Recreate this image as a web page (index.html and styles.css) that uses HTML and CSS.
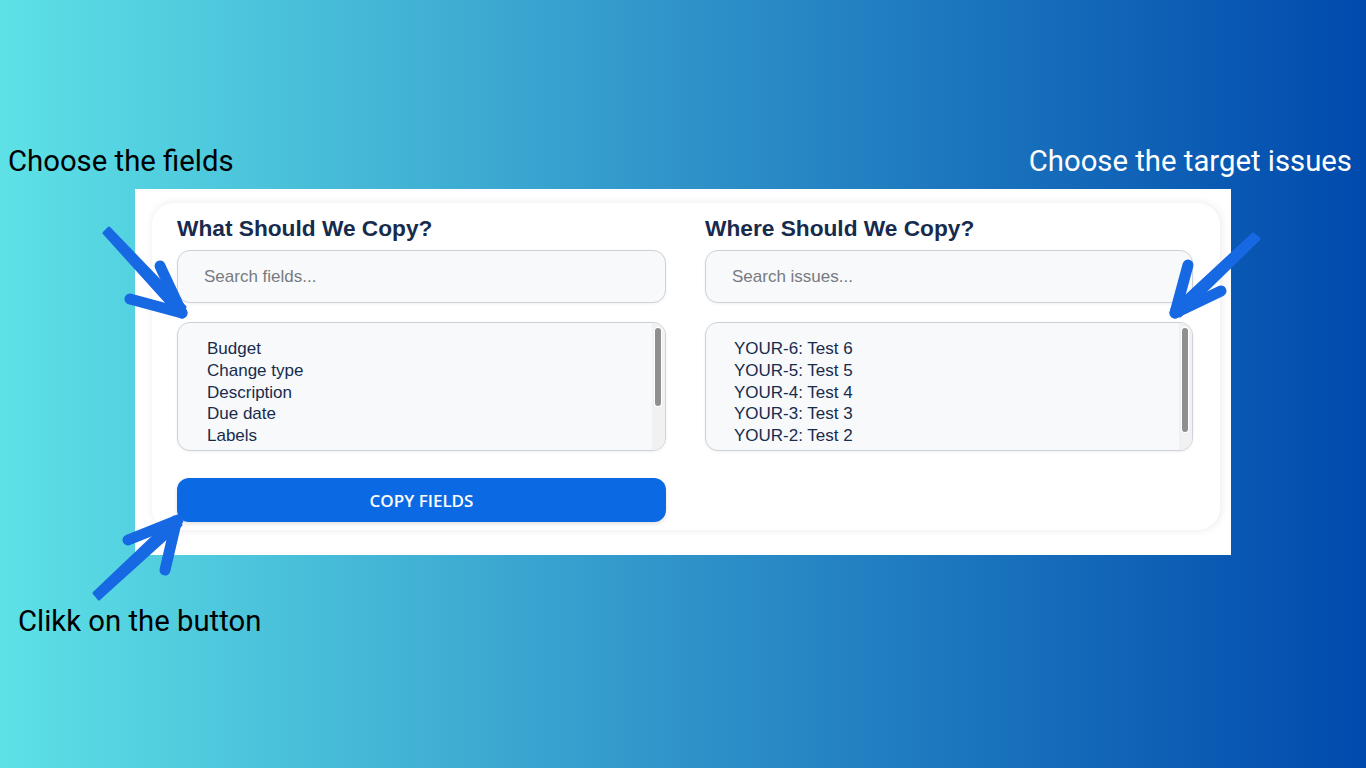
FILE: index.html
```html
<!DOCTYPE html>
<html lang="en">
<head>
<meta charset="utf-8">
<title>Copy Fields</title>
<link rel="stylesheet" href="styles.css">
</head>
<body>
<div class="page">
  <div class="top-notes">
    <p class="note dark">Choose the fields</p>
    <p class="note light">Choose the target issues</p>
  </div>

  <div class="shot">
    <div class="card">
      <section class="col">
        <h2 class="title">What Should We Copy?</h2>
        <input class="search" type="text" placeholder="Search fields...">
        <div class="list list-fields">
          <div class="item">Budget</div>
          <div class="item">Change type</div>
          <div class="item">Description</div>
          <div class="item">Due date</div>
          <div class="item">Labels</div>
          <div class="scroll-track"><div class="scroll-thumb thumb-fields"></div></div>
        </div>
        <button class="copy-btn" type="button">COPY FIELDS</button>
      </section>
      <section class="col">
        <h2 class="title">Where Should We Copy?</h2>
        <input class="search" type="text" placeholder="Search issues...">
        <div class="list list-issues">
          <div class="item">YOUR-6: Test 6</div>
          <div class="item">YOUR-5: Test 5</div>
          <div class="item">YOUR-4: Test 4</div>
          <div class="item">YOUR-3: Test 3</div>
          <div class="item">YOUR-2: Test 2</div>
          <div class="scroll-track"><div class="scroll-thumb thumb-issues"></div></div>
        </div>
      </section>
    </div>
  </div>

  <p class="note dark bottom-note">Clikk on the button</p>

  <svg class="arrows" width="1366" height="768" viewBox="0 0 1366 768" aria-hidden="true">
    <g fill="#1668e3" stroke="#1668e3" stroke-linecap="round" stroke-linejoin="round">
      <polygon points="104,233 109,228 185,307 178,315" stroke-width="3"/>
      <path d="M160 266 L182 313" stroke-width="11" fill="none"/>
      <path d="M130 299 L182 313" stroke-width="11" fill="none"/>

      <polygon points="1253,234 1259,239 1180,316 1172,309" stroke-width="3"/>
      <path d="M1188 265 L1175 313" stroke-width="11" fill="none"/>
      <path d="M1221 291 L1175 313" stroke-width="11" fill="none"/>

      <polygon points="94,593 99,599 181,525 174,517" stroke-width="3"/>
      <path d="M128 540 L178 520" stroke-width="11" fill="none"/>
      <path d="M165 570 L176 523" stroke-width="11" fill="none"/>
    </g>
  </svg>
</div>
</body>
</html>
```

FILE: styles.css
```css
* {
  box-sizing: border-box;
}

html, body {
  margin: 0;
  padding: 0;
}

body {
  font-family: "Liberation Sans", Arial, sans-serif;
}

.page {
  position: relative;
  width: 1366px;
  height: 768px;
  overflow: hidden;
  background: linear-gradient(90deg, #5de1e6 0%, #2f93c9 50%, #004aad 100%);
  display: flex;
  flex-direction: column;
}

.top-notes {
  display: flex;
  justify-content: space-between;
  padding: 144px 14px 0 8px;
}

.note {
  margin: 0;
  font-family: Roboto, "Noto Sans", sans-serif;
  font-size: 29.3px;
  line-height: 34px;
  font-weight: 400;
  white-space: nowrap;
}

.note.dark {
  color: #000;
}

.note.light {
  color: #fff;
}

.shot {
  margin: 11px 0 0 135px;
  width: 1096px;
  height: 366px;
  background: #fff;
  padding: 14px 11px 25px 17px;
}

.card {
  height: 327px;
  border-radius: 22px;
  background: #fff;
  box-shadow: 1px 0 10px rgba(0, 0, 0, 0.09);
  padding: 12px 27px 8px 25px;
  display: grid;
  grid-template-columns: 489px 488px;
  column-gap: 39px;
}

.col {
  display: flex;
  flex-direction: column;
}

.title {
  margin: 0 0 9px;
  font-family: "Liberation Sans", Arial, sans-serif;
  font-size: 22.7px;
  line-height: 26px;
  font-weight: 700;
  color: #172b4d;
  white-space: nowrap;
}

.search {
  height: 53px;
  width: 100%;
  border: 1px solid #cdd1d9;
  border-radius: 13px;
  background: #f8f9fb;
  padding: 0 0 0 26px;
  font-family: "Liberation Sans", Arial, sans-serif;
  font-size: 17px;
  color: #172b4d;
  box-shadow: 0 1px 3px rgba(0, 0, 0, 0.06);
  outline: none;
}

.search::placeholder {
  color: #777a80;
}

.list {
  position: relative;
  margin-top: 19px;
  height: 129px;
  border: 1px solid #cdd1d9;
  border-radius: 13px;
  background: #f8f9fb;
  padding: 15px 0 0 29px;
  overflow: hidden;
  font-size: 17px;
  line-height: 21.75px;
  color: #172b4d;
  box-shadow: 0 1px 3px rgba(0, 0, 0, 0.06);
}

.list-issues {
  padding-left: 28px;
}

.scroll-track {
  position: absolute;
  top: 0;
  right: 0;
  bottom: 0;
  width: 13px;
  background: #f1f1f1;
}

.scroll-thumb {
  position: absolute;
  top: 5px;
  left: 3px;
  width: 6px;
  border-radius: 3px;
  background: #8f8f8f;
  box-shadow: 0 0 0 1px #fff;
}

.thumb-fields {
  height: 78px;
}

.thumb-issues {
  height: 104px;
}

.item {
  white-space: nowrap;
}

.copy-btn {
  margin-top: 27px;
  height: 44px;
  width: 100%;
  border: none;
  border-radius: 12px;
  background: #0b69e4;
  color: #fff;
  font-family: "Open Sans", "Noto Sans", sans-serif;
  font-size: 17px;
  font-weight: 600;
  box-shadow: 0 2px 4px rgba(0, 0, 0, 0.12);
}

.bottom-note {
  margin-top: 49px;
  padding-left: 18px;
}

.arrows {
  position: absolute;
  left: 0;
  top: 0;
  pointer-events: none;
}
```
